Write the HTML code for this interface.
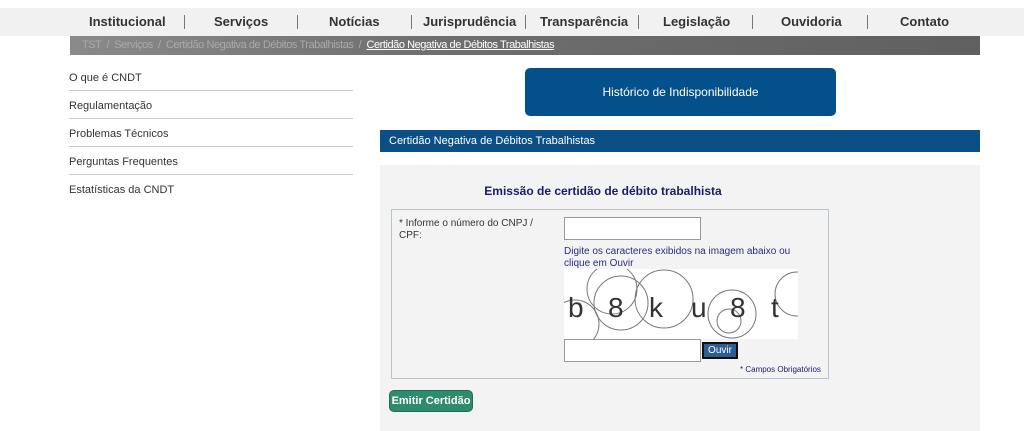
<!DOCTYPE html>
<html><head><meta charset="utf-8"><style>
*{margin:0;padding:0;box-sizing:border-box}
body{width:1024px;height:431px;overflow:hidden;background:#fff;font-family:"Liberation Sans",Arial,sans-serif;position:relative}
.a{position:absolute}
.nav{left:0;top:8px;width:1024px;height:28px;background:#f1f1f1}
.nav span{position:absolute;top:6px;font-size:13px;font-weight:bold;color:#333;white-space:nowrap}
.sep{position:absolute;top:7px;width:1px;height:14px;background:#777}
.bc{left:70px;top:36px;width:910px;height:19px;background:linear-gradient(90deg,#8a8a8a,#6f6f6f 40%,#606060);font-size:11px;letter-spacing:-0.45px;color:#aaa;padding:3px 0 0 12px;white-space:nowrap}
.bc u{color:#fff}
.side{left:69px;width:284px;font-size:11px;color:#333;height:28px;border-bottom:1px solid #ccc;padding-top:9px}
</style></head><body>
<div class="a nav">
<span style="left:89px">Institucional</span><div class="sep" style="left:184px"></div>
<span style="left:214px">Serviços</span><div class="sep" style="left:297px"></div>
<span style="left:329px">Notícias</span><div class="sep" style="left:411px"></div>
<span style="left:423px">Jurisprudência</span><div class="sep" style="left:525px"></div>
<span style="left:540px">Transparência</span><div class="sep" style="left:638px"></div>
<span style="left:663px">Legislação</span><div class="sep" style="left:752px"></div>
<span style="left:781px">Ouvidoria</span><div class="sep" style="left:867px"></div>
<span style="left:900px">Contato</span>
</div>
<div class="a bc">TST &nbsp;/&nbsp; Serviços &nbsp;/&nbsp; Certidão Negativa de Débitos Trabalhistas &nbsp;/&nbsp; <u>Certidão Negativa de Débitos Trabalhistas</u></div>
<div class="a side" style="top:63px">O que é CNDT</div>
<div class="a side" style="top:91px">Regulamentação</div>
<div class="a side" style="top:119px">Problemas Técnicos</div>
<div class="a side" style="top:147px">Perguntas Frequentes</div>
<div class="a side" style="top:175px;border:none">Estatísticas da CNDT</div>
<div class="a" style="left:525px;top:68px;width:311px;height:48px;background:#03508a;border-radius:5px;color:#fff;font-size:12px;text-align:center;line-height:48px">Histórico de Indisponibilidade</div>
<div class="a" style="left:380px;top:130px;width:600px;height:22px;background:#0a4f86;color:#fff;font-size:11px;padding:5px 0 0 9px">Certidão Negativa de Débitos Trabalhistas</div>
<div class="a" style="left:380px;top:165px;width:600px;height:266px;background:#f3f3f3"></div>
<div class="a" style="left:380px;top:184px;width:446px;text-align:center;font-size:12px;font-weight:bold;color:#1a1a6e">Emissão de certidão de débito trabalhista</div>
<div class="a" style="left:391px;top:209px;width:438px;height:170px;border:1px solid #b8c4cc"></div>
<div class="a" style="left:399px;top:218px;font-size:10px;color:#333;line-height:12px">* Informe o número do CNPJ /<br>CPF:</div>
<div class="a" style="left:564px;top:217px;width:137px;height:23px;background:#fff;border:1px solid #999"></div>
<div class="a" style="left:564px;top:246px;font-size:10px;color:#2a2a80;line-height:12px">Digite os caracteres exibidos na imagem abaixo ou<br>clique em Ouvir</div>
<svg class="a" style="left:564px;top:269px" width="234" height="70" viewBox="0 0 234 70">
<rect width="234" height="70" fill="#fff"/>
<g fill="none" stroke="#777" stroke-width="1">
<circle cx="48" cy="20" r="25"/><circle cx="57" cy="34" r="27"/><circle cx="11" cy="55" r="24"/>
<circle cx="100" cy="30" r="29"/><circle cx="168" cy="45" r="24"/><circle cx="165" cy="52" r="12"/><circle cx="233" cy="25" r="22"/>
</g>
<g font-family="Liberation Sans,sans-serif" font-size="28" fill="#333">
<text x="4" y="48">b</text><text x="44" y="48">8</text><text x="85" y="48">k</text><text x="127" y="48">u</text><text x="166" y="48">8</text><text x="207" y="48">t</text></g>
</svg>
<div class="a" style="left:564px;top:339px;width:137px;height:23px;background:#fff;border:1px solid #999"></div>
<div class="a" style="left:702px;top:342px;width:36px;height:17px;background:#2b5f94;border:2px solid #111;color:#fff;font-size:10px;text-align:center;line-height:13px">Ouvir</div>
<div class="a" style="left:740px;top:365px;font-size:8px;color:#1a1a6e">* Campos Obrigatórios</div>
<div class="a" style="left:389px;top:390px;width:84px;height:22px;background:#2e8b6e;border-radius:5px;border:1px solid #1f6d55;color:#fff;font-size:11px;font-weight:bold;text-align:center;line-height:20px">Emitir Certidão</div>
</body></html>
